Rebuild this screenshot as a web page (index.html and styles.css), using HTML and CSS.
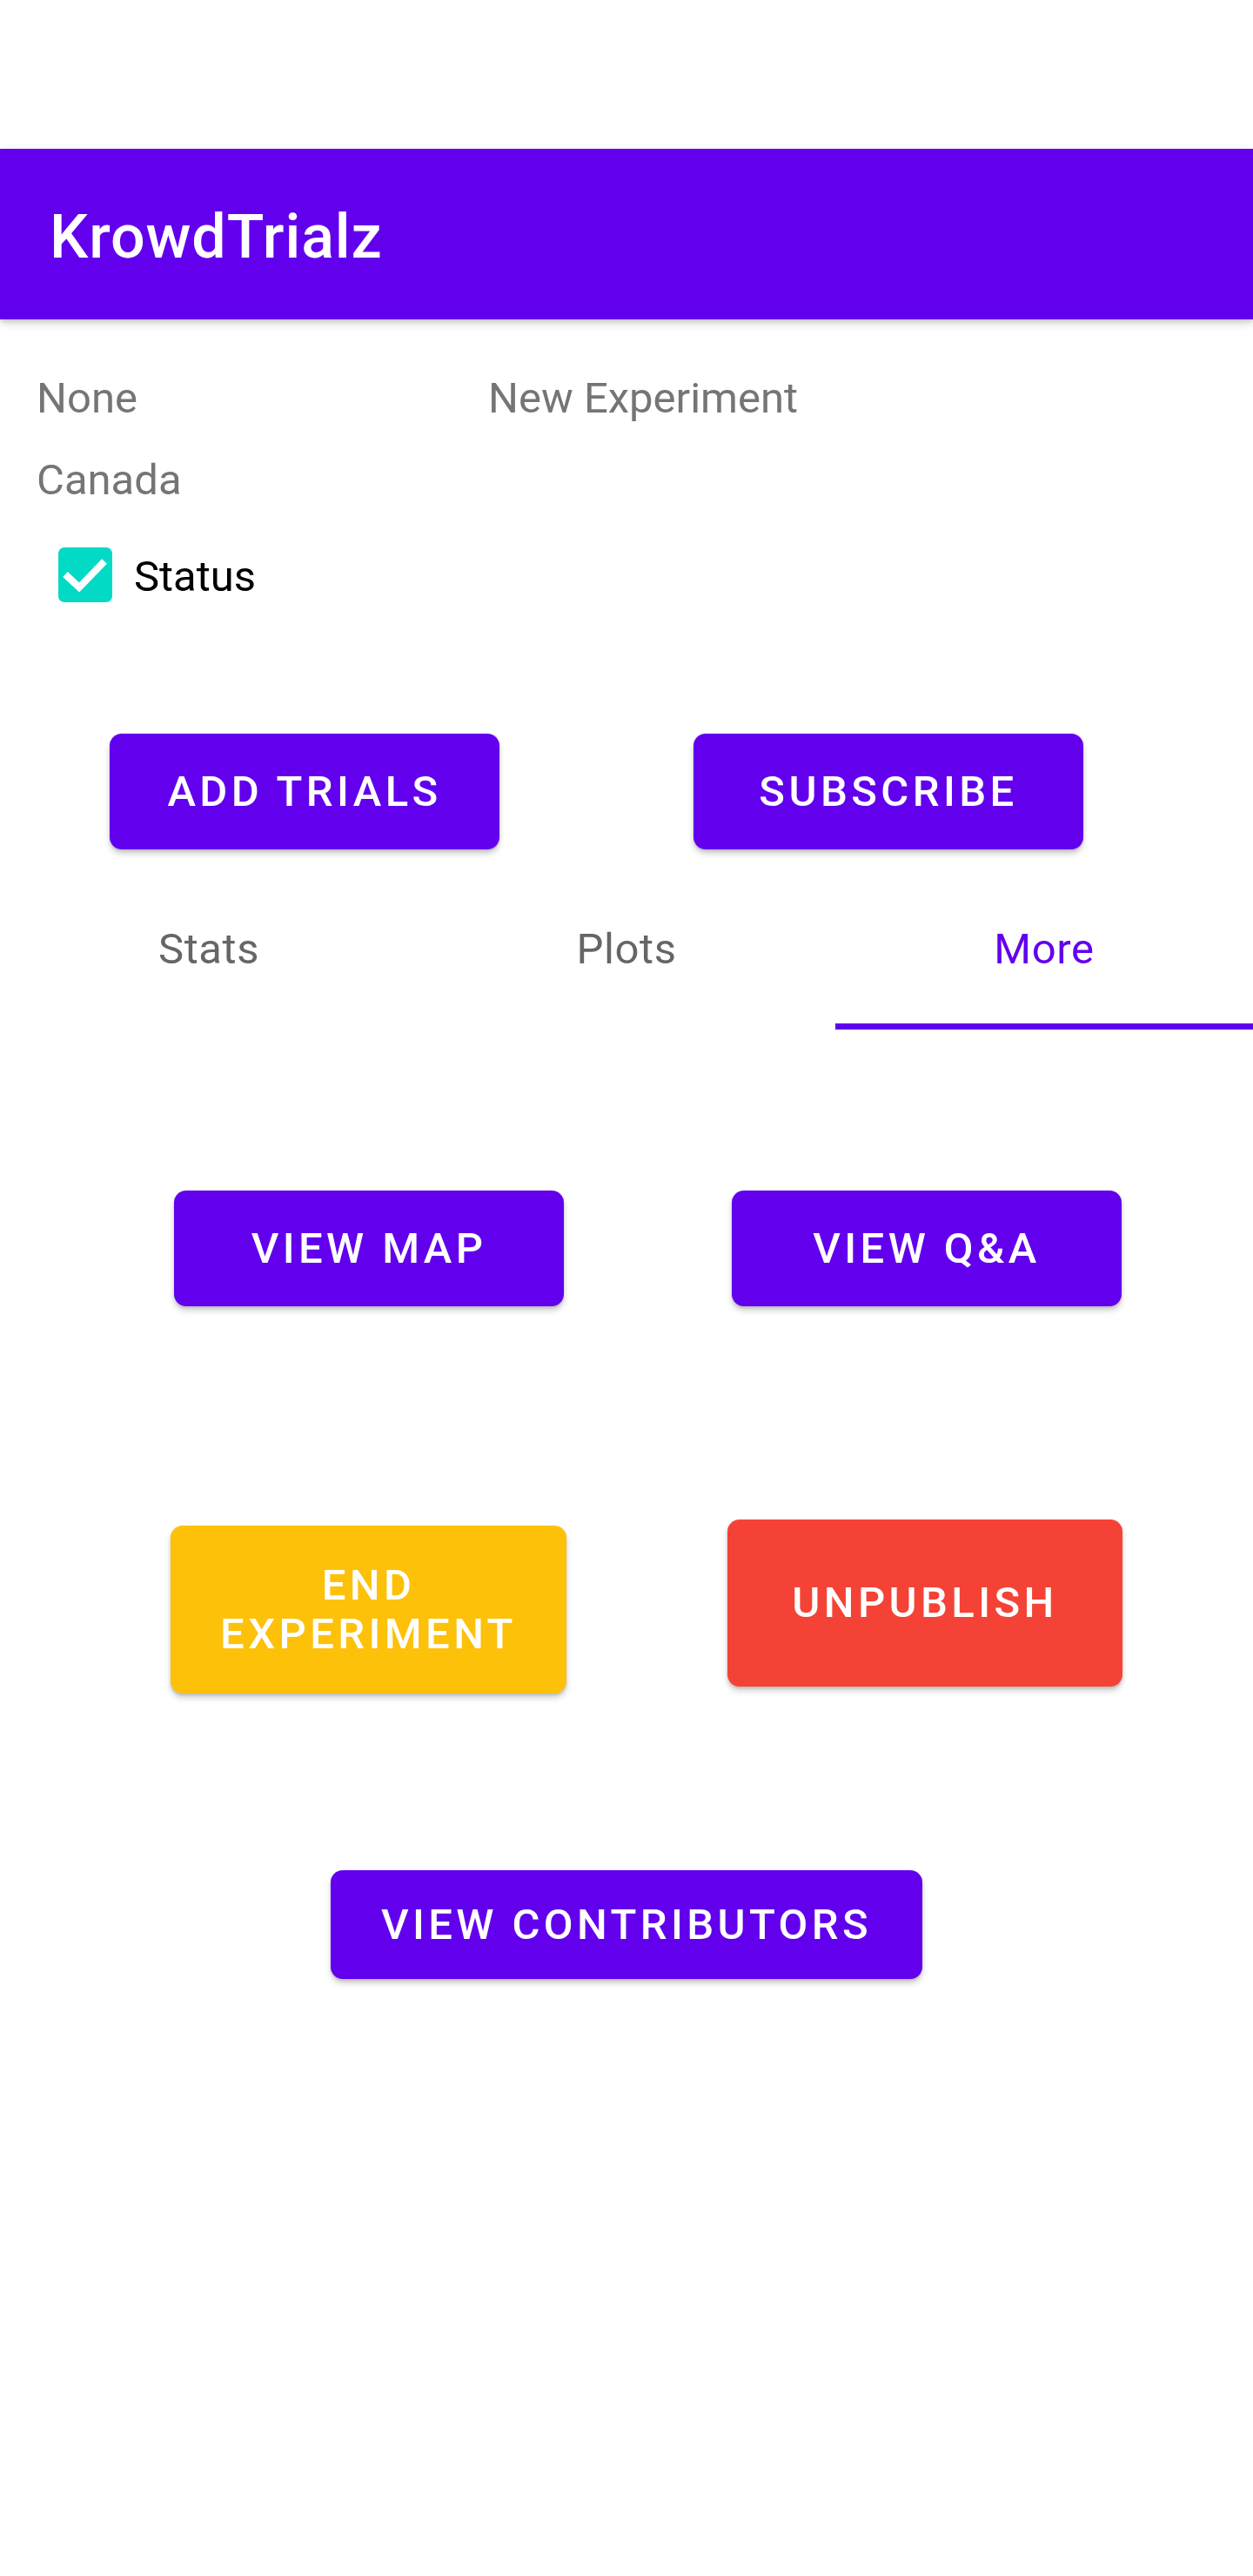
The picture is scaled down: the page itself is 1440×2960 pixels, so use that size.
FILE: index.html
```html
<!DOCTYPE html>
<html lang="en">
<head>
<meta charset="utf-8">
<title>KrowdTrialz</title>
<link rel="stylesheet" href="styles.css">
</head>
<body>
<div class="screen">
  <div class="statusbar"></div>
  <header class="appbar"><h1 class="title">KrowdTrialz</h1></header>

  <section class="info">
    <div class="info-row">
      <span class="info-owner">None</span>
      <span class="info-desc">New Experiment</span>
    </div>
    <div class="info-row info-row-region">
      <span class="info-owner">Canada</span>
    </div>
    <label class="check-row">
      <span class="checkbox">
        <svg width="62" height="63" viewBox="0 0 62 63" aria-hidden="true">
          <polyline points="8,31 24,46 53,16" fill="none" stroke="#ffffff" stroke-width="8" stroke-linecap="butt" stroke-linejoin="miter"/>
        </svg>
      </span>
      <span class="check-label">Status</span>
    </label>
  </section>

  <div class="btn-row row-actions">
    <button class="btn btn-primary btn-add">ADD TRIALS</button>
    <button class="btn btn-primary btn-sub">SUBSCRIBE</button>
  </div>

  <nav class="tabs">
    <div class="tab">Stats</div>
    <div class="tab">Plots</div>
    <div class="tab tab-active">More</div>
  </nav>

  <div class="btn-row row-view">
    <button class="btn btn-primary btn-map">VIEW MAP</button>
    <button class="btn btn-primary btn-qa">VIEW Q&amp;A</button>
  </div>

  <div class="btn-row row-manage">
    <button class="btn btn-end">END<br>EXPERIMENT</button>
    <button class="btn btn-unpub">UNPUBLISH</button>
  </div>

  <div class="btn-row row-contrib">
    <button class="btn btn-primary btn-contrib">VIEW CONTRIBUTORS</button>
  </div>
</div>
</body>
</html>
```

FILE: styles.css
```css
* { box-sizing: border-box; }

html, body {
  margin: 0;
  padding: 0;
  background: #ffffff;
}

body {
  font-family: Roboto, "Liberation Sans", sans-serif;
  width: 1440px;
  height: 2960px;
  overflow: hidden;
}

.screen {
  width: 1440px;
  min-height: 2960px;
  background: #ffffff;
}

.statusbar {
  height: 171px;
  background: #ffffff;
}

.appbar {
  position: relative;
  z-index: 2;
  height: 196px;
  background: #6200ee;
  display: flex;
  align-items: center;
  padding-left: 57px;
  padding-top: 6px;
  box-shadow: 0 4px 10px rgba(0, 0, 0, 0.18), 0 2px 4px rgba(0, 0, 0, 0.10);
}

.title {
  margin: 0;
  color: #ffffff;
  font-size: 70px;
  font-weight: 500;
  line-height: 82px;
  letter-spacing: 0.9px;
}

.info {
  padding-top: 62px;
}

.info-row {
  display: grid;
  grid-template-columns: 519px auto;
  padding-left: 42px;
  font-size: 49px;
  line-height: 57px;
  color: #757575;
}

.info-row-region {
  margin-top: 37px;
}

.check-row {
  display: flex;
  align-items: center;
  gap: 25px;
  margin-top: 49px;
  padding-left: 67px;
  height: 63px;
}

.checkbox {
  width: 62px;
  height: 63px;
  border-radius: 7px;
  background: #03dac5;
  display: flex;
}

.check-label {
  font-size: 49px;
  line-height: 57px;
  color: #000000;
  padding-top: 4px;
}

.btn-row {
  display: flex;
  align-items: flex-start;
}

.btn {
  display: flex;
  align-items: center;
  justify-content: center;
  text-align: center;
  border: none;
  border-radius: 14px;
  margin: 0;
  padding: 0 56px;
  font-family: Roboto, "Liberation Sans", sans-serif;
  font-size: 49px;
  font-weight: 500;
  letter-spacing: 4.4px;
  line-height: 56px;
  color: #ffffff;
  box-shadow: 0 5px 7px rgba(0, 0, 0, 0.18), 0 2px 3px rgba(0, 0, 0, 0.12);
}

.btn-primary {
  background: #6200ee;
}

.row-actions {
  margin-top: 151px;
  padding-left: 126px;
  gap: 223px;
}

.btn-add,
.btn-sub {
  width: 448px;
  height: 133px;
}

.tabs {
  display: grid;
  grid-template-columns: repeat(3, 1fr);
  margin-top: 39px;
}

.tab {
  height: 168px;
  padding-top: 47px;
  text-align: center;
  font-size: 49px;
  line-height: 57px;
  letter-spacing: 0.6px;
  color: #666666;
}

.tab-active {
  color: #6200ee;
  border-bottom: 7px solid #6200ee;
}

.row-view {
  margin-top: 185px;
  padding-left: 200px;
  gap: 193px;
}

.btn-map,
.btn-qa {
  width: 448px;
  height: 133px;
}

.row-manage {
  margin-top: 245px;
  padding-left: 196px;
  gap: 185px;
}

.btn-end {
  width: 455px;
  height: 193px;
  margin-top: 7px;
  background: #fdc10a;
}

.btn-unpub {
  width: 454px;
  height: 192px;
  background: #f44336;
}

.row-contrib {
  margin-top: 203px;
  justify-content: center;
}

.btn-contrib {
  width: 680px;
  height: 125px;
}
```
